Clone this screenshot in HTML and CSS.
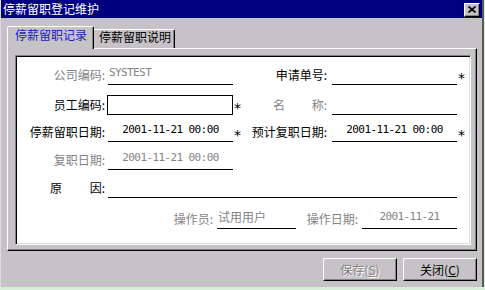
FILE: index.html
```
<!DOCTYPE html>
<html>
  <head>
    <meta charset="UTF-8" />
    <title>停薪留职登记维护</title>
    <link rel="stylesheet" href="styles.css">
  </head>
  <body>
    <div class="win">
      <div class="titlebar">
        <span>停薪留职登记维护</span>
        <span class="close">
          <svg width="8" height="7" viewBox="0 0 8 7"><path d="M0.5 0.5 L7.5 6.5 M7.5 0.5 L0.5 6.5" stroke="#000" stroke-width="1.7" fill="none"/></svg>
        </span>
      </div>
      <div class="tabs">
        <div class="tab active">停薪留职记录</div>
        <div class="tab">停薪留职说明</div>
      </div>
      <div class="page">
        <div class="sheet">
          <div class="row r1">
            <span class="lbl dim">公司编码:</span>
            <span class="fld"><span class="val mono dim left">SYSTEST</span></span>
            <span class="star"></span>
            <span class="lbl lbl2">申请单号:</span>
            <span class="fld"></span>
            <span class="star">*</span>
          </div>
          <div class="row r2">
            <span class="lbl">员工编码:</span>
            <span class="box"></span>
            <span class="star">*</span>
            <span class="lbl lbl2 spread dim n2"><i>名</i><i>称:</i></span>
            <span class="fld"></span>
            <span class="star"></span>
          </div>
          <div class="row r3">
            <span class="lbl">停薪留职日期:</span>
            <span class="fld"><span class="val mono">2001-11-21 00:00</span></span>
            <span class="star">*</span>
            <span class="lbl lbl2">预计复职日期:</span>
            <span class="fld"><span class="val mono">2001-11-21 00:00</span></span>
            <span class="star">*</span>
          </div>
          <div class="row r4">
            <span class="lbl dim">复职日期:</span>
            <span class="fld"><span class="val mono dim">2001-11-21 00:00</span></span>
          </div>
          <div class="row r5">
            <span class="lbl spread n1"><i>原</i><i>因:</i></span>
            <span class="fld wide"></span>
          </div>
          <div class="row op">
            <span class="lbl dim">操作员:</span>
            <span class="fld"><span class="val dim left">试用用户</span></span>
            <span class="lbl dim">操作日期:</span>
            <span class="fld"><span class="val mono dim">2001-11-21</span></span>
          </div>
        </div>
      </div>
      <div class="btns">
        <button class="btn" disabled>保存(<u>S</u>)</button>
        <button class="btn">关闭(<u>C</u>)</button>
      </div>
    </div>
  </body>
</html>
```
FILE: styles.css
```
body {
  margin: 0;
  background: #d8ecd8;
  font-family: "Noto Sans CJK SC", sans-serif;
  font-size: 12px;
  color: #000;
}
i {
  font-style: normal;
}
.win {
  width: 484px;
  height: 287px;
  box-sizing: border-box;
  background: #c6c3c6;
  border-left: 1px solid #dedbde;
  border-right: 2px solid #5a595a;
}
.titlebar {
  height: 18px;
  background: #000080;
  color: #fff;
  display: flex;
  align-items: center;
  justify-content: space-between;
  padding: 0 2px 0 2px;
  line-height: 18px;
}
.close {
  width: 16px;
  height: 14px;
  box-sizing: border-box;
  background: #c6c3c6;
  border: 1px solid;
  border-color: #fff #000 #000 #fff;
  box-shadow: inset -1px -1px 0 #848284;
  display: flex;
  align-items: center;
  justify-content: center;
  margin-top: 1px;
}
.close svg {
  display: block;
  margin: 0 1px 1px 0;
}

/* tabs */
.tabs {
  display: flex;
  align-items: flex-end;
  height: 22px;
  margin: 8px 0 0 6px;
}
.tab {
  height: 19px;
  box-sizing: border-box;
  line-height: 14px;
  padding: 0 3px 0 5px;
  border-top: 1px solid #fff;
  border-right: 1px solid #000;
  box-shadow: inset -1px 0 0 #848284;
  border-top-right-radius: 2px;
  white-space: nowrap;
}
.tab.active {
  position: relative;
  z-index: 1;
  height: 23px;
  margin-bottom: -1px;
  line-height: 16px;
  padding: 0 6px 0 7px;
  border-left: 1px solid #fff;
  border-top-left-radius: 2px;
  background: #c6c3c6;
  color: #2020c8;
}

/* tab page */
.page {
  width: 470px;
  height: 203px;
  box-sizing: border-box;
  margin-left: 6px;
  padding: 6px 5px 5px 7px;
  border: 1px solid;
  border-color: #fff #000 #000 #fff;
  box-shadow: inset -1px -1px 0 #848284;
}
.sheet {
  height: 190px;
  box-sizing: border-box;
  background: #fff;
  border: 1px solid;
  border-color: #848284 #fff #fff #848284;
  box-shadow: inset 1px 1px 0 #000, inset -1px -1px 0 #dedbde;
  padding-top: 9px;
}

/* form rows */
.row {
  display: grid;
  grid-template-columns: 92px 125px 15px 84px 125px 1fr;
  height: 20px;
  margin-top: 8px;
}
.row.r1 {
  margin-top: 0;
}
.row.r2 {
  margin-top: 10px;
}
.row.r3 {
  margin-top: 7px;
}
.row.op {
  grid-template-columns: 201px 79px 66px 95px;
  margin-top: 11px;
}
.lbl {
  line-height: 20px;
  text-align: right;
  padding-right: 3px;
  white-space: nowrap;
}
.lbl2 {
  padding-right: 5px;
}
.row.op .lbl {
  padding-right: 4px;
}
.spread {
  display: flex;
  justify-content: space-between;
}
.spread.n1 {
  padding-left: 34px;
}
.spread.n2 {
  padding-left: 25px;
}
.dim {
  color: #848284;
}
.fld {
  height: 20px;
  box-sizing: border-box;
  border-bottom: 1px solid #000;
}
.fld.wide {
  grid-column: 2 / 6;
}
.box {
  height: 20px;
  box-sizing: border-box;
  margin-left: -1px;
  border: 1px solid #000;
  background: #fff;
}
.val {
  display: block;
  line-height: 16px;
  text-align: center;
  white-space: nowrap;
}
.val.left {
  text-align: left;
  padding-left: 1px;
}
.mono {
  font-family: "DejaVu Sans Mono", monospace;
  font-size: 11px;
  letter-spacing: -0.6px;
}
.star {
  padding: 6px 0 0 1px;
  font-family: "DejaVu Sans", sans-serif;
  font-size: 14px;
  line-height: 14px;
}

/* buttons */
.btns {
  display: flex;
  justify-content: flex-end;
  gap: 6px;
  margin-top: 7px;
  padding-right: 5px;
}
.btn {
  width: 74px;
  height: 23px;
  box-sizing: border-box;
  background: #c6c3c6;
  border: 1px solid;
  border-color: #fff #000 #000 #fff;
  box-shadow: inset -1px -1px 0 #848284;
  font-family: "Noto Sans CJK SC", sans-serif;
  font-size: 12px;
  color: #000;
  padding: 0;
}
.btn:disabled {
  color: #848284;
  text-shadow: 1px 1px 0 #fff;
}
```
